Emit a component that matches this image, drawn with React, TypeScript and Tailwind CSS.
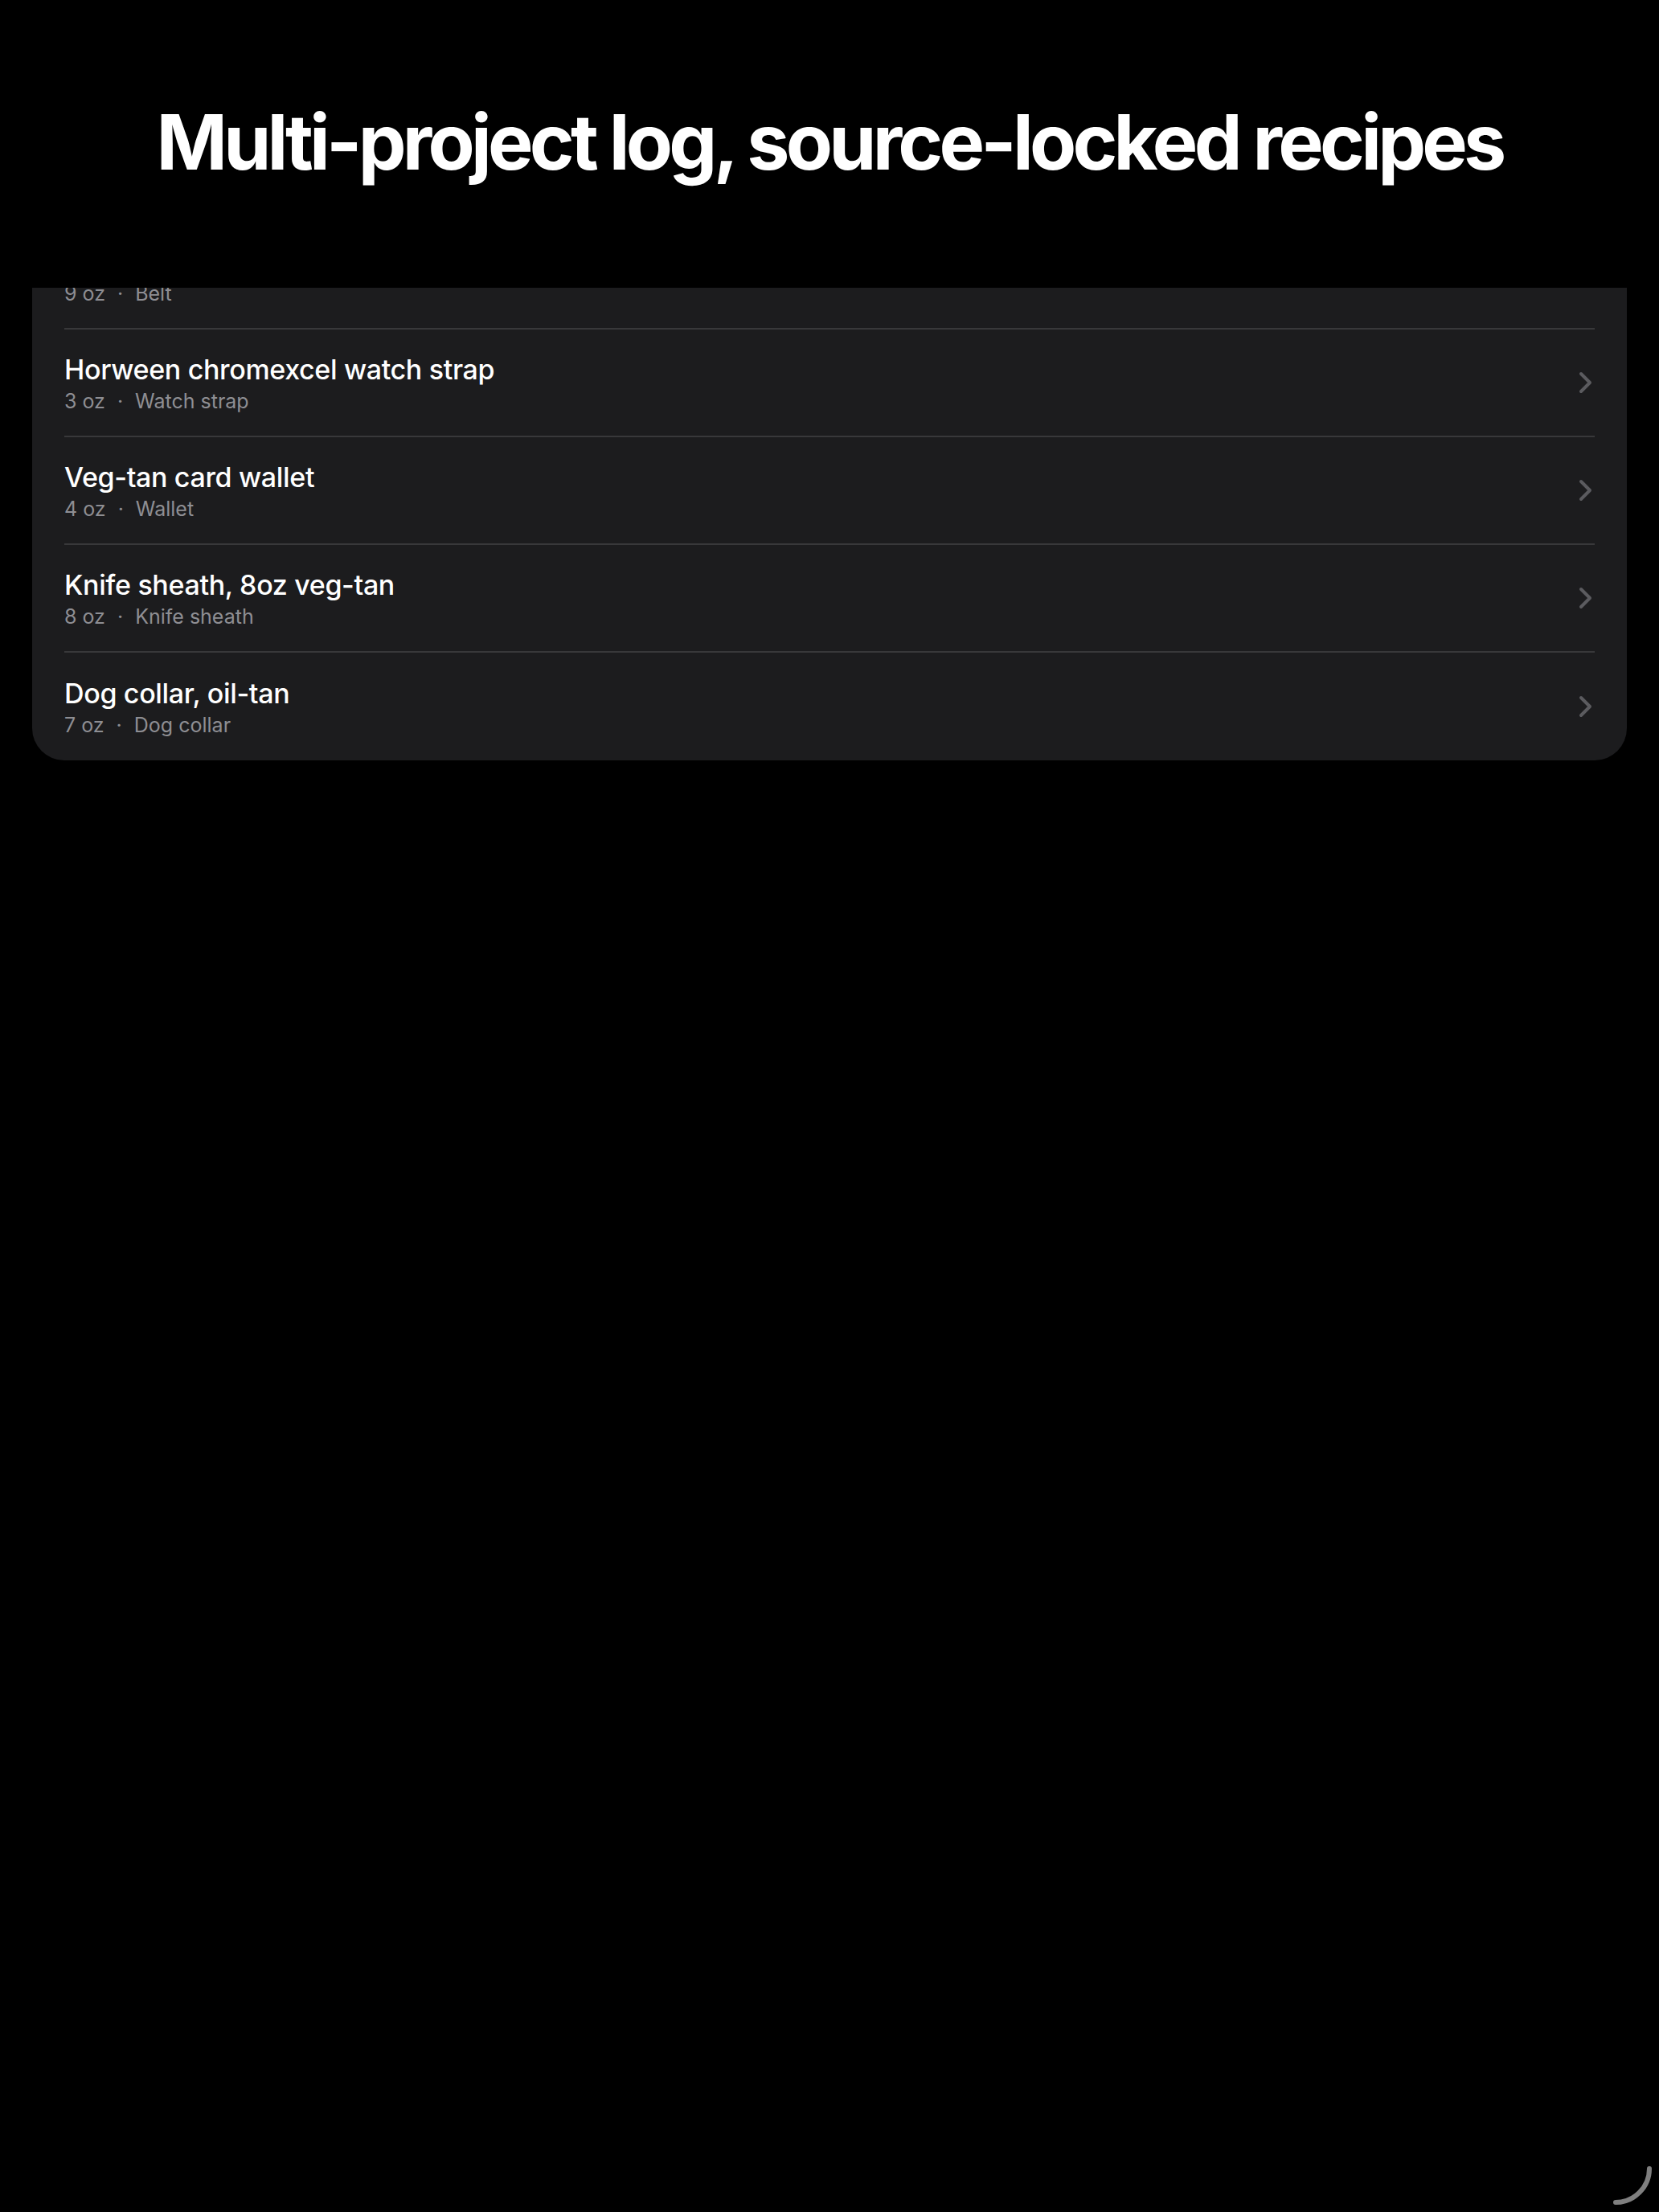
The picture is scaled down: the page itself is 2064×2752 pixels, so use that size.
import React from "react";

const rows = [
  { title: "Belt", weight: "9 oz", kind: "Belt" },
  { title: "Horween chromexcel watch strap", weight: "3 oz", kind: "Watch strap" },
  { title: "Veg-tan card wallet", weight: "4 oz", kind: "Wallet" },
  { title: "Knife sheath, 8oz veg-tan", weight: "8 oz", kind: "Knife sheath" },
  { title: "Dog collar, oil-tan", weight: "7 oz", kind: "Dog collar" },
];

function Chevron() {
  return (
    <svg width="18" height="28" viewBox="0 0 18 28" fill="none">
      <path d="M3 3 L14 14 L3 25" stroke="#5b5b5f" strokeWidth="4" strokeLinecap="round" strokeLinejoin="round" />
    </svg>
  );
}

export default function App() {
  return (
    <div
      className="relative min-h-[2752px] w-full bg-black text-white"
      style={{ fontFamily: "Inter, 'Noto Sans', sans-serif" }}
    >
      <header className="flex h-[358px] justify-center pt-[129px]">
        <h1 className="text-[95px] font-bold leading-none tracking-[-0.05em] text-white">
          Multi-project log, source-locked recipes
        </h1>
      </header>

      <div className="mx-[40px] overflow-hidden rounded-b-[40px] bg-[#1c1c1e]">
        <ul className="-mt-[82px]">
          {rows.map((r, i) => (
            <li key={i} className="px-[40px]">
              <div
                className={
                  "flex h-[134px] items-center justify-between " +
                  (i < rows.length - 1 ? "border-b-2 border-[#38383a]" : "")
                }
              >
                <div className="flex flex-col pt-[2px]">
                  <span className="text-[34px] font-medium leading-[41px] tracking-[-0.01em] text-white">
                    {r.title}
                  </span>
                  <span className="mt-[4px] flex items-center text-[25px] leading-[31px] text-[#8e8e93]">
                    <span>{r.weight}</span>
                    <span className="mx-[15px]">·</span>
                    <span>{r.kind}</span>
                  </span>
                </div>
                <div className="pr-[2px]">
                  <Chevron />
                </div>
              </div>
            </li>
          ))}
        </ul>
      </div>

      <svg
        className="absolute bottom-0 right-0"
        width="64"
        height="64"
        viewBox="0 0 64 64"
        fill="none"
      >
        <path d="M52 10 A 42 42 0 0 1 10 52" stroke="#7f7f7f" strokeWidth="6" strokeLinecap="round" />
      </svg>
    </div>
  );
}
